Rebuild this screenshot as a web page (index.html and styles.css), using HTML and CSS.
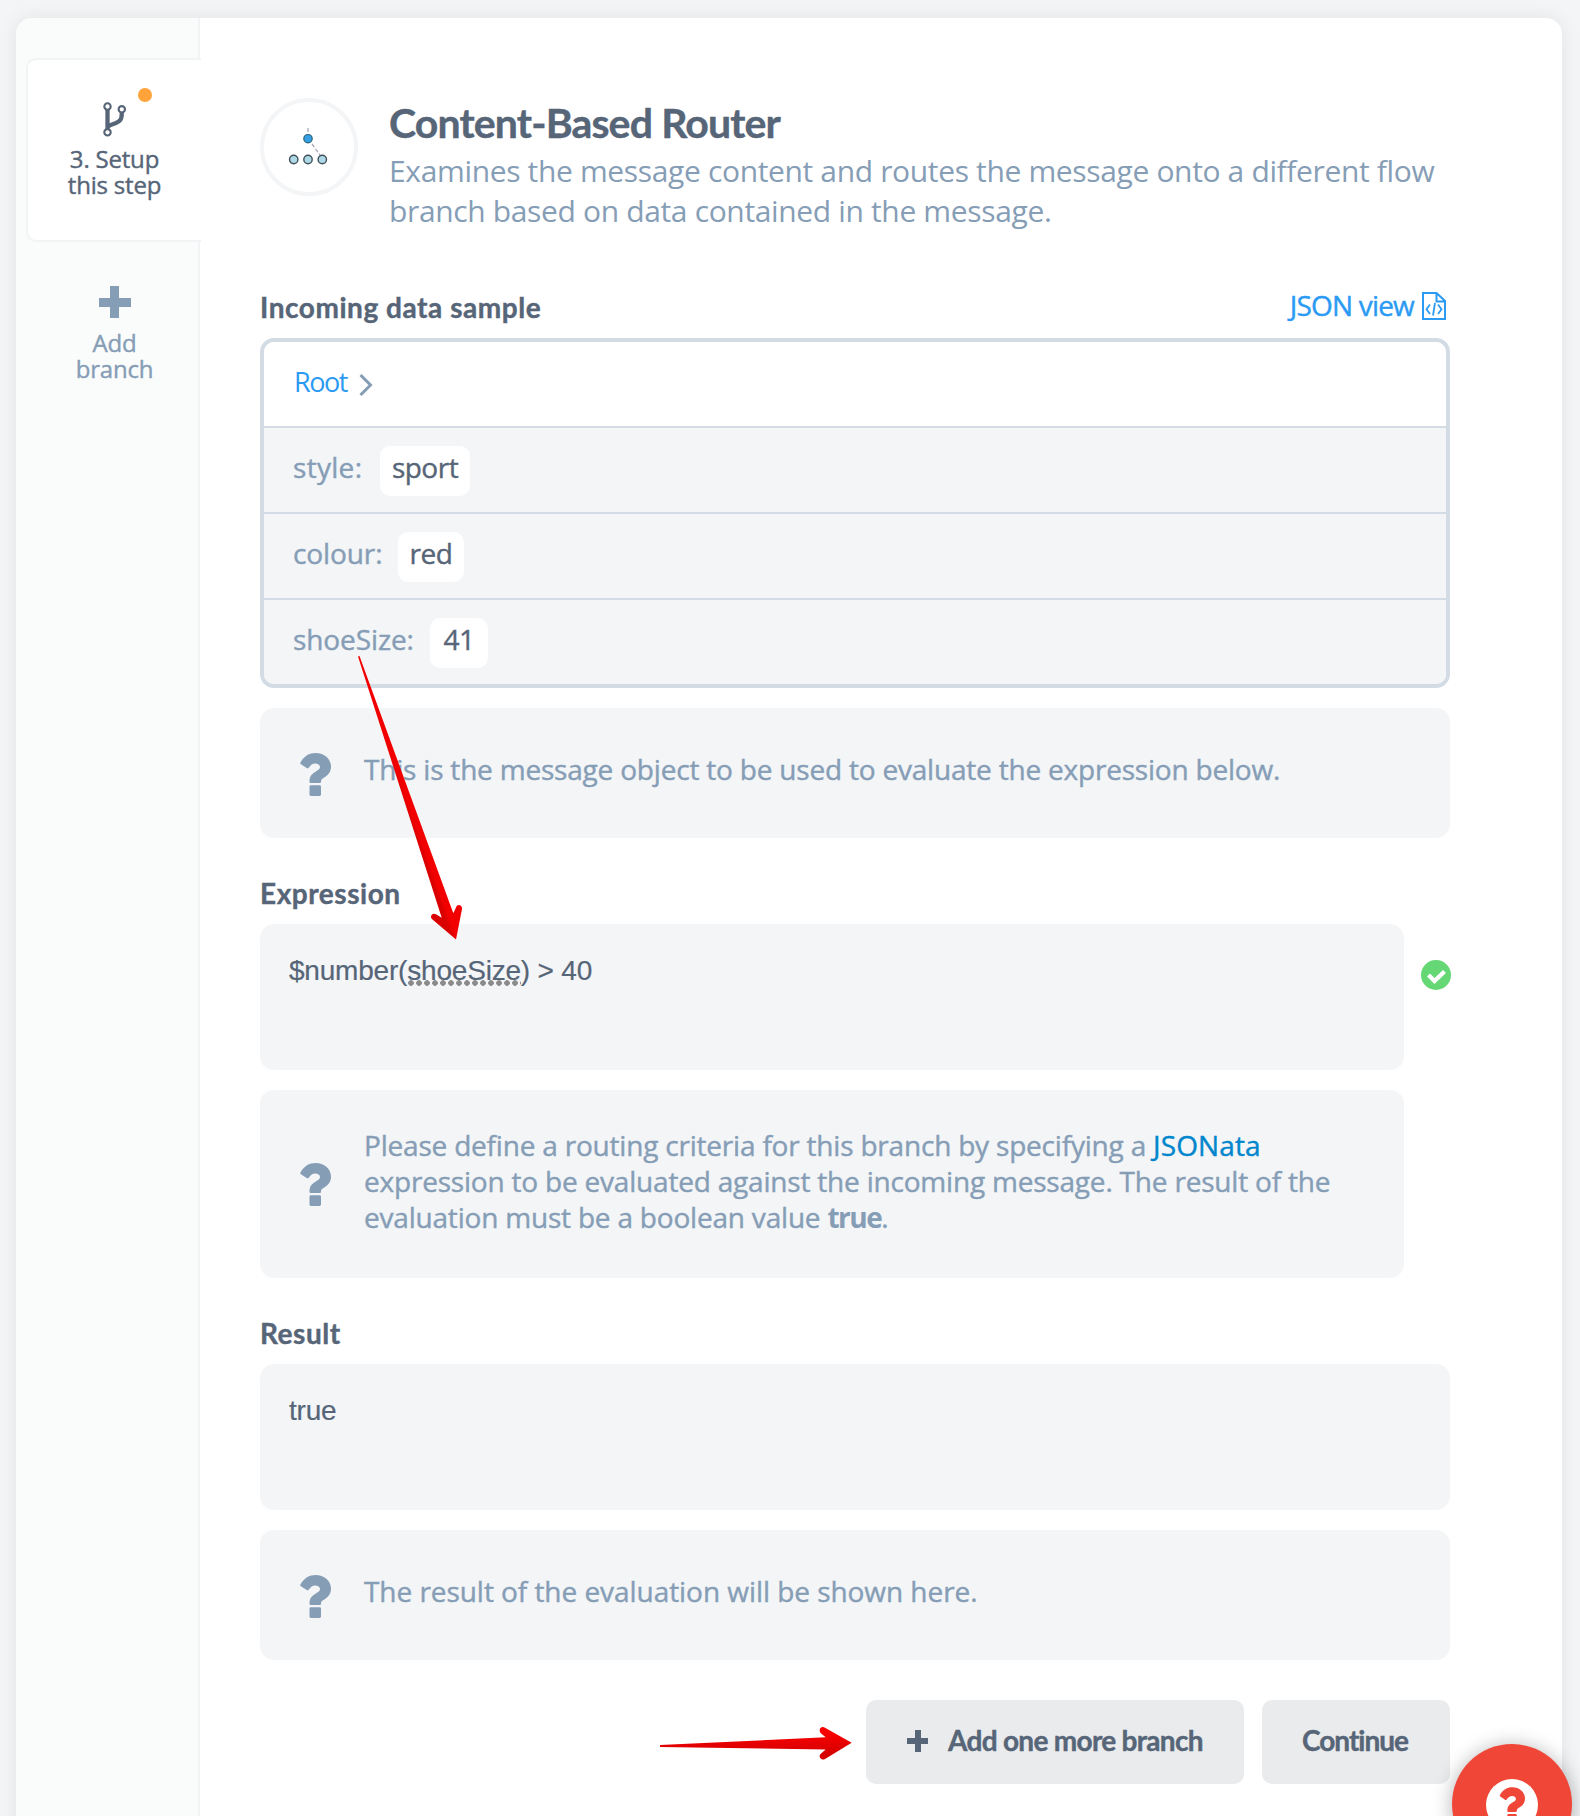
FILE: index.html
```html
<!DOCTYPE html>
<html lang="en">
<head>
<meta charset="utf-8">
<title>Content-Based Router</title>
<link rel="stylesheet" href="styles.css">
</head>
<body>
<svg class="sprite" width="0" height="0">
  <symbol id="question" viewBox="0 0 31 43">
    <path d="M.6 9.200C4.200 3.200 9 0 15.800 0 23.800 0 31 5.600 31 13.600c0 5-2.200 8-6 10.300-3 1.700-4 2.400-4 4.600 0 1-.5 1.500-1.500 1.500H11c-1 0-1.500-.5-1.500-1.500 0-5 2-7.500 6.300-10 3-1.800 4.200-2.500 4.200-4.500 0-2.200-2.300-3.500-4.700-3.500-3 0-4.500 1.500-6.600 4.200-.6.8-1.200.8-2 .3L.9 11.200C.1 10.600 0 10.100.6 9.200z"/>
    <rect x="9.500" y="32.300" width="11.500" height="10.700" rx="1.400"/>
  </symbol>
</svg>
<div class="card">
  <aside class="sidebar">
    <div class="step active">
      <i class="dot"></i>
      <svg class="fork" viewBox="0 0 24 35" width="24" height="35" fill="none" stroke="#566577">
        <path d="M4.500 8v20M18.800 11c0 7-2 8.500-6.300 10.300-3.500 1.300-6.500 2-8 3.700" stroke-width="4.300"/>
        <g fill="#fff" stroke-width="2.100"><circle cx="4.500" cy="4.500" r="3.200"/><circle cx="18.800" cy="7.300" r="3.200"/><circle cx="4.500" cy="30.300" r="3.200"/></g>
      </svg>
      <span>3. Setup<br>this step</span>
    </div>
    <div class="step add">
      <i class="plus big"></i>
      <span>Add<br>branch</span>
    </div>
  </aside>
  <main class="content">
    <header class="header">
      <div class="avatar">
        <svg viewBox="0 0 40 40" width="40" height="40">
          <path d="M20 1v6M24 17l8 11" stroke="#a9aab8" stroke-width="1.300" stroke-dasharray="4 2" fill="none"/>
          <circle cx="20" cy="11.700" r="4.200" fill="#35a0e4" stroke="#27607d" stroke-width="1.200"/>
          <g fill="#add8e6" stroke="#43515c" stroke-width="1.400"><circle cx="5.700" cy="32.500" r="4.200"/><circle cx="20" cy="32.500" r="4.200"/><circle cx="34.300" cy="32.500" r="4.200"/></g>
        </svg>
      </div>
      <div class="intro">
        <h1>Content-Based Router</h1>
        <p>Examines the message content and routes the message onto a different flow<br>branch based on data contained in the message.</p>
      </div>
    </header>

    <div class="heading first">
      <h2>Incoming data sample</h2>
      <a class="json">JSON view
        <svg viewBox="0 0 24 28" width="24" height="28" fill="none" stroke="#2b9af3" stroke-width="2"><path d="M1 1h13.500L23 9v18H1zM14.500 1v8.500H23"/><path d="M8 12.500l-3.500 4.700L8 22M16 12.500l3.500 4.700L16 22M13 11l-2 12.500" stroke-width="1.800"/></svg>
      </a>
    </div>
    <div class="table">
      <div class="row root"><a>Root</a><svg viewBox="0 0 14 22" width="14" height="22" fill="none" stroke="#869db6" stroke-width="3"><path d="M1.500 1l10 10-10 10"/></svg></div>
      <div class="row"><span class="key k1">style:</span><span class="chip">sport</span></div>
      <div class="row"><span class="key k2">colour:</span><span class="chip c2">red</span></div>
      <div class="row"><span class="key k3">shoeSize:</span><span class="chip c3">41</span></div>
    </div>
    <div class="help"><svg class="q"><use href="#question"/></svg><p>This is the message object to be used to evaluate the expression below.</p></div>

    <h2 class="heading">Expression</h2>
    <div class="field">
      <div class="box">$number(<span class="spell">shoeSize</span>) &gt; 40</div>
      <svg class="check" viewBox="0 0 30 30" width="30" height="30"><circle cx="15" cy="15" r="15" fill="#65d774"/><path d="M7.500 15l6 6L23.500 11.500" fill="none" stroke="#fff" stroke-width="4.200"/></svg>
    </div>
    <div class="help narrow"><svg class="q"><use href="#question"/></svg><p>Please define a routing criteria for this branch by specifying a <a>JSONata</a><br>expression to be evaluated against the incoming message. The result of the<br>evaluation must be a boolean value <b>true</b>.</p></div>

    <h2 class="heading">Result</h2>
    <div class="box">true</div>
    <div class="help result"><svg class="q"><use href="#question"/></svg><p>The result of the evaluation will be shown here.</p></div>

    <div class="actions">
      <button class="more"><i class="plus"></i>Add one more branch</button>
      <button class="next">Continue</button>
    </div>
  </main>
</div>
<svg class="arrows" viewBox="0 0 1580 1816" width="1580" height="1816">
  <defs>
    <linearGradient id="g1" gradientUnits="userSpaceOnUse" x1="405" y1="822" x2="419" y2="817"><stop offset=".35" stop-color="#d90000"/><stop offset=".65" stop-color="#f20000"/></linearGradient>
    <linearGradient id="g2" x1="0" y1="0" x2="0" y2="1"><stop offset=".2" stop-color="#f80000"/><stop offset=".8" stop-color="#d60000"/></linearGradient>
  </defs>
  <path fill="url(#g1)" d="M358 656.500L441.700 917.700 436 914.300C432.500 912 429 916.500 432.200 919.300L456 939.500 462 909C462.500 904.500 457 903.500 456 907.500L453.300 913.300 359.500 656z"/>
  <path fill="url(#g2)" d="M660 1745L825.700 1737.300 820.500 1733C818 1729 821.500 1725.500 825 1727.700L851.700 1742.700 825 1759C821.500 1761 818 1757 820.500 1754L825.700 1749.500 660 1747z"/>
</svg>
<div class="fab"><svg viewBox="0 0 52 52" width="52" height="52"><circle cx="26" cy="26" r="26" fill="#fff"/><use href="#question" x="13.500" y="8" width="25.500" height="36" fill="#ef4637"/></svg></div>
</body>
</html>
```
FILE: styles.css
```css
* { box-sizing: border-box; }
body {
  margin: 0; height: 1816px; overflow: hidden; padding: 18px 18px 0 16px;
  background: #f3f5f7; color: #566577;
  font: 400 28px/36px "Open Sans", "Noto Sans", sans-serif; letter-spacing: -.2px;
  -webkit-text-stroke: .4px;
}
h1, h2, p { margin: 0; }
svg { display: block; flex: none; }
.sprite { position: absolute; }
.card {
  display: flex; height: 1840px; background: #fff; border-radius: 16px;
  box-shadow: 0 0 20px rgba(0, 0, 0, .08); overflow: hidden;
}
.sidebar {
  width: 184px; flex: none; background: #fafcfc; border-right: 2px solid #f2f3f4;
  padding: 40px 0 0 10px; font-size: 24px; line-height: 26px; text-align: center;
}
.step { display: flex; flex-direction: column; align-items: center; position: relative; }
.step.active {
  width: 175px; height: 184px; padding: 42px 0 0; background: #fff;
  border: 2px solid #f2f3f4; border-right: 0; border-radius: 10px 0 0 10px;
}
.step.active span { margin-top: 9px; }
.dot { position: absolute; left: 110px; top: 28px; width: 14px; height: 14px; border-radius: 50%; background: #ffa33a; }
.step.add { width: 177px; padding: 44px 0 0; color: #869db6; }
.step.add span { margin-top: 12px; }
.plus {
  width: 21px; height: 22px;
  background: linear-gradient(currentColor, currentColor) center / 6px 100% no-repeat,
              linear-gradient(currentColor, currentColor) center / 100% 6px no-repeat;
}
.plus.big { width: 32px; height: 32px; background-size: 9px 100%, 100% 9px; }

.content { width: 1190px; margin-left: 60px; padding-top: 80px; }
.header { display: flex; height: 132px; }
.avatar {
  width: 98px; height: 98px; border: 4px solid #f3f5f7; border-radius: 50%;
  padding: 25px 0 0 24px; flex: none;
}
.intro { margin-left: 31px; white-space: nowrap; }
h1 { font: 700 41px/50px Lato, sans-serif; letter-spacing: -.85px; margin-bottom: 3px; }
.intro p { font-size: 30px; line-height: 40px; letter-spacing: -.35px; color: #869db6; -webkit-text-stroke: 0; }

h2 { font: 700 28px/40px Lato, sans-serif; letter-spacing: .55px; }
.heading { margin: 35px 0 11px; height: 40px; }
.heading.first { margin-top: 57px; display: flex; justify-content: space-between; }
.json { display: flex; gap: 8px; color: #2b9af3; line-height: 36px; letter-spacing: -.8px; margin-right: 4px; }
.json svg { margin-top: 5px; }
.table { border: 4px solid #d3dce5; border-radius: 14px; overflow: hidden; height: 350px; }
.row { display: flex; height: 86px; padding-left: 29px; border-top: 2px solid #d3dce5; background: #f3f5f7; line-height: 78px; }
.row.root { height: 84px; border: 0; background: #fff; font-size: 27px; letter-spacing: -1.500px; line-height: 79px; padding-left: 30px; -webkit-text-stroke: 0; }
.row a { color: #2b9af3; }
.row.root svg { margin: 32px 0 0 12px; }
.key { color: #869db6; letter-spacing: -.1px; }
.k1 { width: 87px; letter-spacing: .3px; }
.k2 { width: 105px; }
.k3 { width: 137px; }
.chip { margin-top: 18px; width: 90px; height: 50px; line-height: 42px; border-radius: 10px; background: #fff; text-align: center; letter-spacing: -.5px; }
.c2 { width: 66px; }
.c3 { width: 58px; }

.help {
  display: flex; align-items: center; height: 130px; margin-top: 20px;
  border-radius: 14px; background: #f3f5f7; color: #869db6; white-space: nowrap;
}
.help p { padding-bottom: 8px; margin-left: 33px; }
.help a { color: #0086cc; letter-spacing: .1px; }
.help b { letter-spacing: -1.500px; -webkit-text-stroke: 0; }
.result p { letter-spacing: -.05px; }
.narrow { width: 1144px; height: 188px; }
.narrow p { padding-bottom: 6px; }
.q { width: 31px; height: 43px; margin: 3px 0 0 40px; fill: #869db6; }
.narrow .q { margin-top: 1px; }
.box {
  height: 146px; padding: 29px 29px; border-radius: 14px; background: #f3f5f7;
  font-family: "Liberation Sans", Arial, sans-serif; letter-spacing: -.2px; -webkit-text-stroke: .2px;
}
.field { display: flex; justify-content: space-between; }
.field .box { width: 1144px; }
.check { margin: 36px -1px 0 0; }
.spell { background: radial-gradient(circle at 4px 3px, #8b8b8b 2.500px, transparent 3.100px) 0 100% / 8px 6px repeat-x; }

.actions { display: flex; justify-content: flex-end; gap: 18px; margin-top: 40px; }
button {
  display: flex; align-items: center; height: 84px; padding: 0 40px 5px; border: 0; border-radius: 10px;
  background: #e9ebed; color: #566577; font: 700 28px/36px Lato, sans-serif; letter-spacing: -.7px; white-space: nowrap;
}
.more { width: 378px; }
.more .plus { margin: 3px 20px 0 1px; }
.next { width: 188px; letter-spacing: -1px; }
.arrows { position: absolute; left: 0; top: 0; pointer-events: none; }
.fab {
  position: absolute; left: 1452px; top: 1744px; width: 120px; height: 120px; padding: 35px 0 0 34px;
  border-radius: 50%; background: #ef4637; box-shadow: 0 2px 20px rgba(0, 0, 0, .3);
}
```
